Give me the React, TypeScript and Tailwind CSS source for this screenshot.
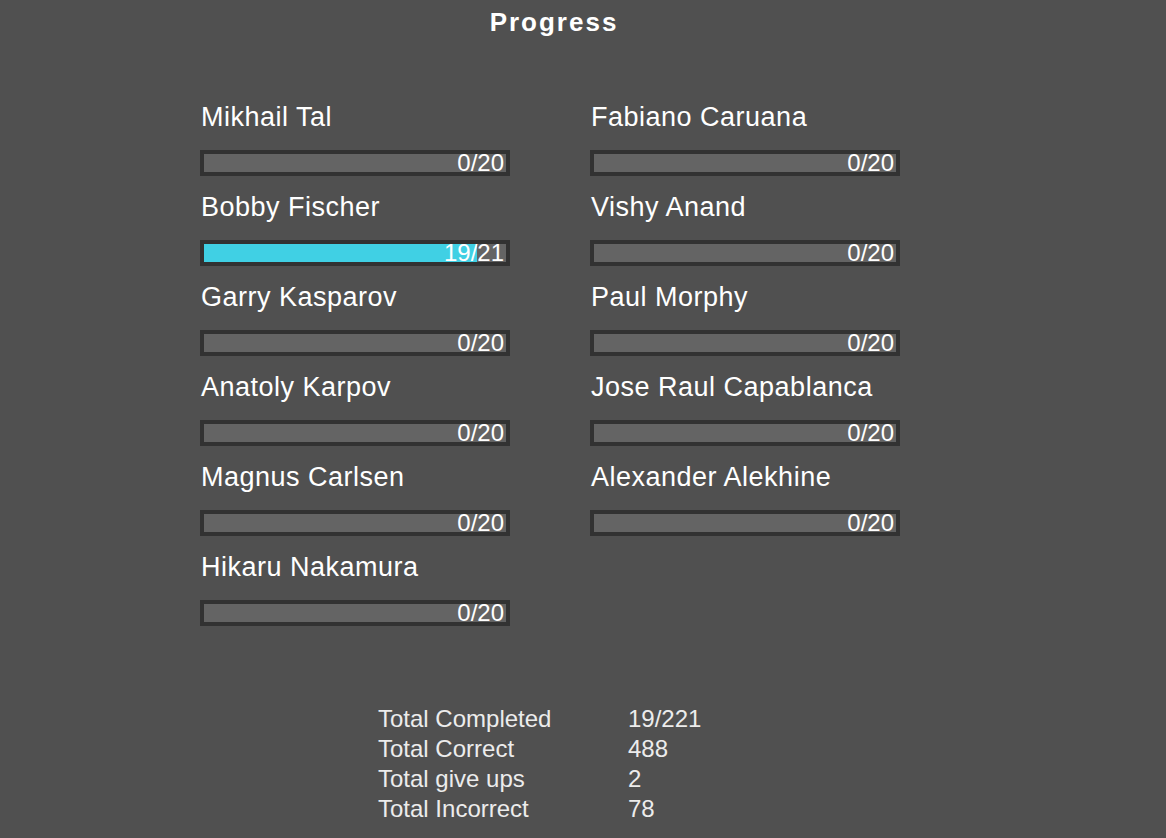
import React from 'react';

type Player = { name: string; done: number; total: number };

const left: Player[] = [
  { name: 'Mikhail Tal', done: 0, total: 20 },
  { name: 'Bobby Fischer', done: 19, total: 21 },
  { name: 'Garry Kasparov', done: 0, total: 20 },
  { name: 'Anatoly Karpov', done: 0, total: 20 },
  { name: 'Magnus Carlsen', done: 0, total: 20 },
  { name: 'Hikaru Nakamura', done: 0, total: 20 },
];

const right: Player[] = [
  { name: 'Fabiano Caruana', done: 0, total: 20 },
  { name: 'Vishy Anand', done: 0, total: 20 },
  { name: 'Paul Morphy', done: 0, total: 20 },
  { name: 'Jose Raul Capablanca', done: 0, total: 20 },
  { name: 'Alexander Alekhine', done: 0, total: 20 },
];

const stats = [
  ['Total Completed', '19/221'],
  ['Total Correct', '488'],
  ['Total give ups', '2'],
  ['Total Incorrect', '78'],
];

const PlayerRow: React.FC<{ p: Player }> = ({ p }) => (
  <div className="flex flex-col">
    <div className="h-[34px] pl-px text-[27px] leading-[34px] tracking-[0.5px] text-white">{p.name}</div>
    <div className="mt-4 mb-[14px] h-[26px] w-[310px] border-4 border-[#323232] bg-[#646464]">
      <div className="relative h-full">
        <div
          className="h-full bg-[#40d0e4]"
          style={{ width: `${(p.done / p.total) * 100}%` }}
        />
        <span className="absolute right-[2px] top-1/2 -translate-y-1/2 text-[24px] leading-none text-white">
          {p.done}/{p.total}
        </span>
      </div>
    </div>
  </div>
);

const App: React.FC = () => {
  return (
    <div className="min-h-[838px] w-full bg-[#505050] font-['Liberation_Sans',Arial,sans-serif]">
      <div className="w-[1108px]">
        <h1 className="pt-[5px] text-center text-[26px] font-bold leading-[34px] tracking-[2px] text-white">
          Progress
        </h1>
        <div className="mt-[61px] ml-[200px] flex gap-[80px]">
          <div className="flex flex-col">
            {left.map((p) => (
              <PlayerRow key={p.name} p={p} />
            ))}
          </div>
          <div className="flex flex-col">
            {right.map((p) => (
              <PlayerRow key={p.name} p={p} />
            ))}
          </div>
        </div>
        <div className="mt-[64px] ml-[378px] flex flex-col text-[24px] leading-[30px] text-[#ececec]">
          {stats.map(([label, value]) => (
            <div key={label} className="flex">
              <span className="w-[250px]">{label}</span>
              <span>{value}</span>
            </div>
          ))}
        </div>
      </div>
    </div>
  );
};

export default App;
